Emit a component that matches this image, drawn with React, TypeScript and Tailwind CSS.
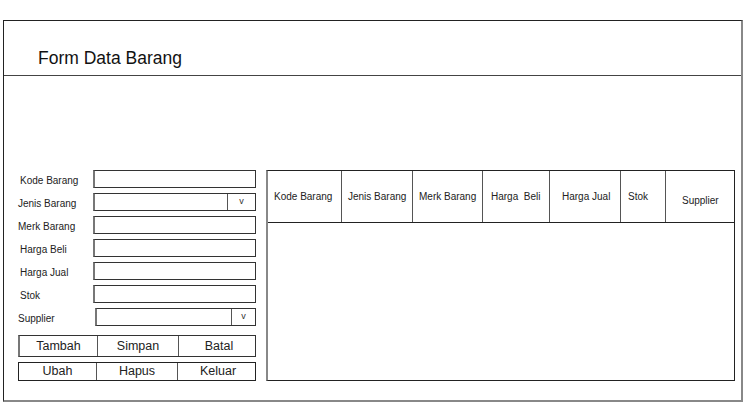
import React from "react";

const fields = [
  { label: "Kode Barang", pad: "pl-[2px]", select: false },
  { label: "Jenis Barang", pad: "pl-0", select: true },
  { label: "Merk Barang", pad: "pl-0", select: false },
  { label: "Harga Beli", pad: "pl-[2px]", select: false },
  { label: "Harga Jual", pad: "pl-[2px]", select: false },
  { label: "Stok", pad: "pl-[2px]", select: false },
  { label: "Supplier", pad: "pl-0", select: true },
];

const columns = [
  { title: "Kode Barang", cls: "pl-[6px] pt-[18px]" },
  { title: "Jenis Barang", cls: "pl-[6px] pt-[18px]" },
  { title: "Merk Barang", cls: "pl-[6px] pt-[18px]" },
  { title: "Harga  Beli", cls: "pl-[8px] pt-[18px] whitespace-pre" },
  { title: "Harga Jual", cls: "pl-[12px] pt-[18px]" },
  { title: "Stok", cls: "pl-[7px] pt-[18px]" },
  { title: "Supplier", cls: "pl-[16px] pt-[22px]" },
];

const App = () => {
  return (
    <div
      className="w-[747px] h-[404px] bg-white pt-[20px] pl-[3px]"
      style={{ fontFamily: '"Liberation Sans", Arial, sans-serif' }}
    >
      <div className="w-[740px] h-[382px] border-t border-l border-[#222] border-r-2 border-b-2 border-r-[#888] border-b-[#888] flex flex-col">
        {/* Header */}
        <div className="h-[55px] border-b border-[#444] flex items-center pl-[34px] pt-[21px]">
          <h1 className="text-[17.5px] text-[#111]">Form Data Barang</h1>
        </div>

        {/* Body */}
        <div className="flex pt-[94px] pl-[14px] gap-[10px]">
          {/* Form */}
          <div className="w-[238px] flex flex-col">
            <div className="flex flex-col gap-[5px]">
              {fields.map((f) => (
                <div key={f.label} className="flex items-center h-[18px]">
                  <span className={`w-[75px] text-[10px] text-[#222] pt-[2px] ${f.pad}`}>
                    {f.label}
                  </span>
                  {f.select ? (
                    <div
                      className={`flex-1 h-[18px] flex border border-[#333] border-l-2 border-l-[#777] ${
                        f.label === "Supplier" ? "ml-[2px]" : ""
                      }`}
                    >
                      <div className="flex-1" />
                      <div
                        className={`${
                          f.label === "Supplier" ? "w-[24px]" : "w-[28px]"
                        } border-l border-[#555] flex items-center justify-center text-[9px] text-[#333]`}
                      >
                        v
                      </div>
                    </div>
                  ) : (
                    <div className="flex-1 h-[18px] border border-[#333] border-l-2 border-l-[#777]" />
                  )}
                </div>
              ))}
            </div>

            {/* Buttons */}
            <div className="mt-[9px] flex flex-col gap-[5px]">
              <div className="grid grid-cols-[78px_81px_80px] h-[22px] border border-[#333] border-l-2 border-l-[#777] text-[12.5px] text-[#222]">
                <div className="flex items-center justify-center border-r border-[#555]">Tambah</div>
                <div className="flex items-center justify-center border-r border-[#555]">Simpan</div>
                <div className="flex items-center justify-center">Batal</div>
              </div>
              <div className="grid grid-cols-[78px_81px_80px] h-[19px] border border-[#222] text-[12.5px] text-[#222]">
                <div className="flex items-center justify-center border-r border-[#555] leading-none">Ubah</div>
                <div className="flex items-center justify-center border-r border-[#555] leading-none">Hapus</div>
                <div className="flex items-center justify-center leading-none">Keluar</div>
              </div>
            </div>
          </div>

          {/* Table */}
          <div className="w-[469px] h-[211px] border border-[#222] border-l-2 border-l-[#888] flex flex-col">
            <div className="grid grid-cols-[74px_71px_70px_67px_71px_45px_1fr] h-[52px] border-b border-[#222]">
              {columns.map((c, i) => (
                <div
                  key={c.title}
                  className={`text-[10px] text-[#222] ${c.cls} ${
                    i < columns.length - 1 ? "border-r border-[#555]" : ""
                  }`}
                >
                  {c.title}
                </div>
              ))}
            </div>
            <div className="flex-1" />
          </div>
        </div>
      </div>
    </div>
  );
};

export default App;
